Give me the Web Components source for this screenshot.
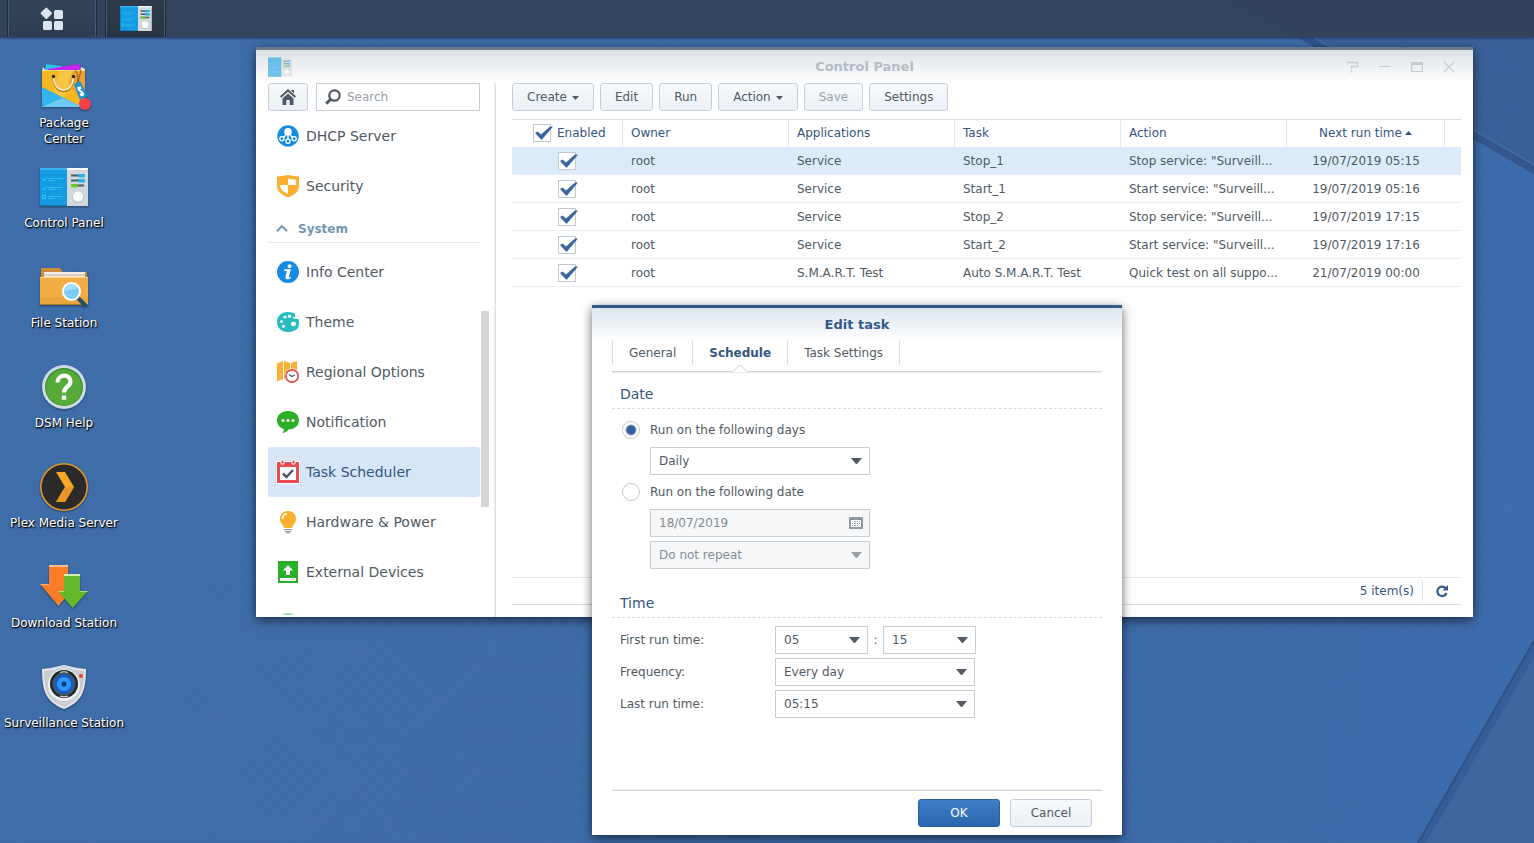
<!DOCTYPE html>
<html lang="en">
<head>
<meta charset="utf-8">
<title>Control Panel</title>
<style>
  html, body { margin: 0; height: 100%; }
  body {
    font: 12px/16px "DejaVu Sans", Verdana, sans-serif;
    color: #505a64;
    overflow: hidden;
  }
</style>
</head>
<body>
<ds-desktop></ds-desktop>

<script>
const ICONS = {
  apps: ['0 0 24 24', `<g fill="#dbe3ef"><rect x="2" y="2" width="8.600" height="8.600" rx="1" transform="rotate(45 6.300 6.300)"/><rect x="14" y="3" width="9" height="9" rx="1.500"/><rect x="3" y="14" width="9" height="9" rx="1.500"/><rect x="14" y="14" width="9" height="9" rx="1.500"/></g>`],
  panel: ['0 0 48 38', `<rect width="27" height="38" fill="#159be2"/><rect width="27" height="2" fill="#3db4ee"/><rect y="37" width="27" height="1" fill="#0c7dbd"/><rect x="27" width="21" height="38" fill="#d3d8dc"/><rect x="27" width="21" height="2" fill="#f6f8f9"/><path d="M2.500 11l1.500 2 3-4M2.500 20l1.500 2 3-4M2.500 27.500h3v3h-3z" fill="none" stroke="#2ed0ee"/><path d="M8 10.500h15M8 12.500h7M8 19.500h15M8 21.500h7M8 28.500h15M8 30.500h7" stroke="#2ecdf0" stroke-width="1" opacity=".8"/><path d="M31 7.500h13M31 12.500h13M31 17.500h13" stroke="#4c5b66" stroke-width="2.200"/><rect x="38" y="6" width="7" height="3.500" rx="1" fill="#27b5e8"/><rect x="38" y="11" width="7" height="3.500" rx="1" fill="#27b5e8"/><rect x="31" y="16" width="7" height="3.500" rx="1" fill="#6cc82f"/><circle cx="38" cy="29" r="6" fill="#b9c0c6"/><circle cx="38" cy="28.500" r="5.200" fill="#fafbfb"/>`],
  pkg: ['0 0 52 50', `<path d="M6 2l16 2v10H4z" fill="#2fc4ee"/><path d="M8 7l31-5 3 10H8z" fill="#c922e8"/><path d="M3 5l4 5H2zM41 5l4 2v4h-5z" fill="#f3e8c2"/><rect x="2" y="8" width="43" height="37" fill="#f5b921"/><path d="M20 8h25v37z" fill="#f0a031"/><path d="M20 8h13L24 36 14 30z" fill="#f7c544"/><path d="M2 25l40 20H2z" fill="#35b3ee"/><path d="M2 45l20-9 20 9z" fill="#6ccaf4"/><path d="M2 8h43v1H2z" fill="#ffdf80"/><path d="M13.500 15c0 8 4 14 10 14s10-6 10-14" fill="none" stroke="#b57a15" stroke-width="2.400"/><path d="M13.500 14c0 8 4 14 10 14s10-6 10-14" fill="none" stroke="#f9e7bd" stroke-width="1.800"/><circle cx="13.500" cy="14.500" r="1.700" fill="#2d2213"/><circle cx="33.500" cy="14.500" r="1.700" fill="#2d2213"/><path d="M35 8c4 4 3 10 2 15M41 8c-1 6-3 10-3 14" fill="none" stroke="#8a5a16"/><path d="M34 22l6-3 8 15-8 4z" fill="#1f93cf"/><path d="M37 25.500l3.500-1.500 1.200 2.500-1.700 1 3 2.500 1.500 3-3.500 1.500-1.500-2.500 1.700-1-3-2.500z" fill="#fff"/><circle cx="45" cy="42" r="6" fill="#f2414a"/>`],
  folder: ['0 0 48 40', `<path d="M1 1h19l3 4h24v10H1z" fill="#c98f3a"/><path d="M4 5h41v8H4z" fill="#f1ece2"/><path d="M4 8h41" stroke="#bdb3a2"/><path d="M0 10h48v28H0z" fill="#f2ae45"/><path d="M0 30h48v8H0z" fill="#e9a43e"/><path d="M0 37h48v1H0z" fill="#ad772a"/><path d="M0 10h48v1H0z" fill="#ffd07a"/><path d="M38 31l8 8" stroke="#1f5166" stroke-width="4"/><circle cx="31.500" cy="24.500" r="8.500" fill="#7ccdf5" stroke="#fdfdfd" stroke-width="2"/><path d="M25 24a7 7 0 0 1 13-3z" fill="#a4dff9"/>`],
  help: ['0 0 44 44', `<circle cx="22" cy="22" r="22" fill="#c9dcea"/><circle cx="22" cy="22" r="19" fill="#3f8a2c"/><circle cx="22" cy="22.500" r="18" fill="#55aa39"/><path d="M15.500 17.500c0-9 13-9 13-1 0 5.500-6.500 5-6.500 11" fill="none" stroke="#fff" stroke-width="4.200"/><rect x="19.800" y="30.500" width="4.400" height="4.200" fill="#fff"/>`],
  plex: ['0 0 48 48', `<circle cx="24" cy="24" r="24" fill="#e0952d"/><circle cx="24" cy="24" r="22.400" fill="#2b2a29"/><path d="M16 9h9l9 15-9 15h-9l9-15z" fill="#f5a725"/><path d="M34 24l-9 15h-9l9-15z" fill="#e8952a"/>`],
  down: ['0 0 48 44', `<path d="M9 0h19v19h8L18.500 41 0 19h9z" fill="#fb7d25"/><path d="M9 0h19v2H9z" fill="#ffc08b"/><path d="M9 19v1L1 20 0 19z" fill="#ffb070"/><path d="M24 9h16v17h8L32.500 43 18 26h6z" fill="#63b92a"/><path d="M24 9h16v2H24z" fill="#d2f3b2"/><path d="M18 26h6v1h-5zM40 26h8l-1 1h-7z" fill="#a9e27b"/>`],
  cam: ['0 0 44 44', `<path d="M0 4Q11 3 22 0q11 3 22 4c0 22-4 33-22 40C4 37 0 26 0 4z" fill="#e1e5e9"/><path d="M2 6q10-1 20-4 10 3 20 4c0 20-4 29-20 36C6 35 2 26 2 6z" fill="#c8cdd2"/><circle cx="22" cy="20" r="16" fill="#eef0f2"/><circle cx="22" cy="19" r="14" fill="#23272c"/><circle cx="22" cy="19" r="11.500" fill="#4b545e"/><circle cx="22" cy="19" r="10" fill="#115fc2"/><circle cx="22" cy="19" r="7" fill="#2f97f2"/><circle cx="22" cy="19" r="2.600" fill="#0c3c83"/><path d="M18 7.500q4-1.500 8 0M18 31q4 1.500 8 0" stroke="#dfe4e8" stroke-width="1.200" fill="none"/><circle cx="39" cy="11" r="2" fill="#e53f2e"/>`],
  home: ['0 0 16 16', `<path d="M8 0l8 7.300-1.300 1.400L8 2.700 1.300 8.700 0 7.300z"/><path d="M8 4.500l5.500 5V16h-3.800v-5H6.300v5H2.500V9.500z"/><path d="M11.500 1H14v3.500L11.500 2z"/>`],
  search: ['0 0 16 16', `<circle cx="9.500" cy="6.500" r="5.200" fill="none" stroke="currentColor" stroke-width="2.200"/><path d="M5.800 10.200L1.200 14.600" stroke="currentColor" stroke-width="3"/>`],
  dhcp: ['0 0 22 22', `<circle cx="11" cy="11" r="10.700" fill="#148ae0"/><circle cx="11" cy="6.800" r="3.800" fill="#fff"/><path d="M11 9v6M9 9.500Q8 12 5 12.500M13 9.500q1 2.500 4 3" stroke="#fff" stroke-width="1.500" fill="none"/><g fill="#148ae0" stroke="#fff" stroke-width="1.300"><circle cx="4.900" cy="13.800" r="2.100"/><circle cx="11" cy="16.200" r="2.100"/><circle cx="17.100" cy="13.800" r="2.100"/></g>`],
  shield: ['0 0 22 22', `<path d="M0 1.500Q5.500 1 11 0q5.500 1 11 1.500V11c0 6-5 9-11 11.500C5 20 0 17 0 11z" fill="#fbaf33"/><path d="M11 3.500q4 .8 7.800 1V10H11zM3.300 10H11v9C7 17 3.300 15 3.300 11z" fill="#fff"/>`],
  info: ['0 0 22 22', `<circle cx="11" cy="11" r="11" fill="#148ae0"/><circle cx="12.600" cy="5.200" r="1.900" fill="#fff"/><path d="M7.300 8.300h6.600l-2.100 7.700c-.2.800.6.700 2-.3l.5.700c-2 2.200-6.600 2.900-5.900-.3l1.500-6H7.100z" fill="#fff"/>`],
  theme: ['0 0 22 20', `<path d="M11 0C4 0 0 4.500 0 10s4 10 11 10c4.500 0 8.500-1.500 10.500-5 .5-1.300-.5-1.300-2-1-3 .8-5.500 0-5.500-2 0-2.200 2-2.500 5-2.200 2 .2 3 0 2.900-1C21.500 3 17 0 11 0z" fill="#25bcc0"/><path d="M17 14h4.600l.4-5h-5z" fill="#25bcc0"/><g fill="#fff"><circle cx="8" cy="5" r="1.600"/><circle cx="12.600" cy="4.200" r="1.600"/><circle cx="4.500" cy="9.500" r="1.500"/><circle cx="6.500" cy="14.300" r="1.600"/><path d="M15 5h3v-3h4v5h-4z"/><ellipse cx="16.500" cy="11.800" rx="2.600" ry="2.100"/></g>`],
  region: ['0 0 22 22', `<path d="M0 2.500L6 0v18l-6 2.500zM7 0l6 2v17l-6-1.500zM14 2l6-2v19h-6z" fill="#fbaf33"/><circle cx="15" cy="15" r="7.500" fill="#fff"/><circle cx="15" cy="15" r="6.200" fill="#fff" stroke="#e84d52" stroke-width="1.700"/><path d="M12 13.500l3 2 3-1.500" fill="none" stroke="#505a64" stroke-width="1.300"/>`],
  bell: ['0 0 22 22', `<path d="M11 0c6.500 0 11 4 11 9.300s-4.500 9.200-10.500 9.300C10 21 7.500 22 5 22c1.500-1 2-2.500 1.800-4C2.500 16.800 0 13.500 0 9.300 0 4 4.500 0 11 0z" fill="#2bae28"/><g fill="#fff"><circle cx="6" cy="9.500" r="1.500"/><circle cx="11" cy="9.500" r="1.500"/><circle cx="16" cy="9.500" r="1.500"/></g>`],
  sched: ['0 0 24 24', `<path d="M0 1h4V0h5v1h6V0h5v1h4v23H0z" fill="#fff"/><path d="M1 2h22v21H1z" fill="#ea4a50"/><path d="M4 7h16v13H4z" fill="#fff"/><path d="M5 0h3v4H5zM16 0h3v4h-3z" fill="#ea4a50" stroke="#fff"/><path d="M7 13.500l3.500 3.500L17 10" fill="none" stroke="#505a64" stroke-width="2.500"/>`],
  bulb: ['0 0 22 22', `<path d="M11 0c5 0 8 3.500 8 8 0 4.500-3.500 6-4 9H7c-.5-3-4-4.500-4-9 0-4.500 3-8 8-8z" fill="#fbaf33"/><path d="M5.500 8c0-3 2-5 4.500-5.300" fill="none" stroke="#fff" stroke-width="1.600"/><path d="M7 18.500h8M7.500 20.300h7M9 21.700h4" stroke="#8f979e" stroke-width="1"/>`],
  ext: ['0 0 22 22', `<rect x="1" width="20" height="22" rx=".5" fill="#2bae28"/><path d="M11 4l5 5.500h-3V14H9V9.500H6z" fill="#fff"/><rect x="3" y="17" width="16" height="3" fill="#fff"/><rect x="15" y="18" width="2" height="1" fill="#fbaf33"/>`],
  update: ['0 0 22 22', `<circle cx="11" cy="11" r="9" fill="#9fd6a2"/>`],
  up: ['0 0 12 7', `<path d="M.8 6.300L6 1.200l5.200 5.100" fill="none" stroke="currentColor" stroke-width="1.900"/>`],
  caret: ['0 0 7 4', `<path d="M0 0h7L3.500 4z"/>`],
  sort: ['0 0 7 4', `<path d="M0 4h7L3.500 0z"/>`],
  whelp: ['0 0 12 12', `<path d="M0 1.500h10.500v4H4.500V8M4.500 9.500v2" fill="none" stroke="currentColor" stroke-width="1.400"/>`],
  wmin: ['0 0 12 12', `<path d="M0 5.500h12" stroke="currentColor" stroke-width="1.200"/>`],
  wmax: ['0 0 12 12', `<path d="M.7 1.500h10.600v9H.7z" fill="none" stroke="currentColor" stroke-width="1.200"/><path d="M0 1h12v3H0z"/>`],
  wclose: ['0 0 12 12', `<path d="M.6 .6l10.800 10.800M11.400 .6L.6 11.400" stroke="currentColor" stroke-width="1.300"/>`],
  refresh: ['0 0 12 12', `<path d="M9.600 3.200A4.700 4.700 0 1 0 10.500 8" fill="none" stroke="currentColor" stroke-width="2.200"/><path d="M12 0v5.500H6.500z"/>`],
  cal: ['0 0 14 12', `<rect width="14" height="12" rx="1"/><path d="M2 3h10v7H2z" fill="#fff"/><path d="M5 4h2v1H5zM8 4h1v1H8zM10 4h1v1h-1zM3 6h1v1H3zM5 6h2v1H5zM8 6h1v1H8zM10 6h1v1h-1zM3 8h1v1H3zM5 8h2v1H5zM8 8h1v1H8z"/>`]
};

/* Registers an element whose shadow root is cloned from the given markup. */
const define = (name, html) => {
  const tpl = document.createElement('template');
  tpl.innerHTML = html;
  customElements.define(name, class extends HTMLElement {
    constructor() {
      super();
      this.attachShadow({ mode: 'open' }).append(tpl.content.cloneNode(true));
    }
  });
};

customElements.define('ds-icon', class extends HTMLElement {
  constructor() {
    super();
    this.attachShadow({ mode: 'open' });
  }
  connectedCallback() {
    const [box, body] = ICONS[this.getAttribute('name')];
    this.shadowRoot.innerHTML = `<style>:host{display:block;flex:none}svg{display:block;width:100%;height:100%;overflow:visible}</style>
      <svg viewBox="${box}" fill="currentColor" aria-hidden="true">${body}</svg>`;
  }
});

define('ds-button', `
<style>
  :host { display: block; }
  button {
    display: flex; align-items: center; justify-content: center; gap: 5px;
    box-sizing: border-box; width: 100%; height: 28px; padding: 0 14px; margin: 0;
    font: inherit; color: #505a64; white-space: nowrap;
    background: linear-gradient(#f7fafc, #eaf0f5);
    border: 1px solid #c6d0da; border-radius: 3px;
  }
  :host([off]) button { color: #9aa3ab; }
  :host([primary]) button { color: #fff; background: linear-gradient(#3f7fc9, #2a66ae); border-color: #2a5f9e; }
  :host([square]) button { padding: 0; }
</style>
<button type="button"><slot></slot></button>`);

define('ds-wallpaper', `
<style>
  :host { position: absolute; inset: 0; background: linear-gradient(100deg, #4070ac, #3e6da9 60%, #3d6eae); }
  svg { position: absolute; right: 0; width: 334px; height: 220px; }
  .top { top: 0; } .bottom { bottom: 0; height: 243px; }
  .weave { position: absolute; inset: 0;
    background:
      repeating-linear-gradient(0deg, rgba(20,50,100,.04) 0 1px, transparent 1px 4px),
      repeating-linear-gradient(45deg, rgba(20,50,100,.03) 0 1px, transparent 1px 3px),
      repeating-linear-gradient(135deg, rgba(20,50,100,.03) 0 1px, transparent 1px 3px); }
</style>
<svg class="top" viewBox="0 0 334 220"><path d="M48 0H334V165z" fill="#3c629b"/><path d="M33 0H48L334 165V174z" fill="#34578f"/><path d="M49 0L334 165" stroke="#4f78ad"/></svg>
<svg class="bottom" viewBox="0 0 334 243"><path d="M334 41V243H218z" fill="#3e699f"/><path d="M334 41V57L226 243H218z" fill="#365e9b"/><path d="M334 41L218 243" stroke="#2f5286" stroke-width="2"/></svg>
<div class="weave"></div>`);

define('ds-taskbar', `
<style>
  :host { display: flex; gap: 8px; box-sizing: border-box; height: 38px; padding-left: 7px; position: relative;
    background: rgba(50,64,84,.9); border-bottom: 1px solid #2a4468; box-shadow: 0 1px 2px rgba(20,40,80,.4); }
  button { display: flex; align-items: center; justify-content: center; margin: 0; padding: 0; box-sizing: border-box;
    height: 37px; width: 90px; border: 1px solid #1d2a3b; border-width: 0 1px; background: linear-gradient(#33445a, #2e3d50);
    box-shadow: inset 1px 0 #4a5b70, inset -1px 0 #4a5b70; }
  button + button { width: 61px; background: linear-gradient(#2c3a4c, #273443); }
  .apps { width: 24px; height: 24px; }
  .panel { width: 32px; height: 25px; }
</style>
<button aria-label="Main menu"><ds-icon class="apps" name="apps"></ds-icon></button>
<button aria-label="Control Panel"><ds-icon class="panel" name="panel"></ds-icon></button>`);

define('ds-shortcut', `
<style>
  :host { display: block; height: 100px; }
  a { display: grid; justify-items: center; row-gap: 4px; color: #fff; text-decoration: none; text-align: center;
    text-shadow: 1px 1px 1px #000, 0 1px 2px rgba(0,0,0,.8); white-space: nowrap; }
  .art { display: flex; height: 48px; align-items: center; justify-content: center;
    filter: drop-shadow(0 1px 1px rgba(0,0,0,.4)); }
</style>
<a href="#"><span class="art"><slot name="icon"></slot></span><span><slot></slot></span></a>`);

define('ds-nav-item', `
<style>
  :host { display: block; }
  a { display: flex; align-items: center; gap: 6px; box-sizing: border-box; height: 50px; padding: 0 8px;
    font-size: 14px; line-height: 20px; color: #505a64; text-decoration: none; border-radius: 3px; white-space: nowrap; }
  :host([current]) a { background: #d6e6f8; color: #35557f; }
  .pic { width: 24px; display: flex; justify-content: center; }
</style>
<a href="#"><span class="pic"><slot name="icon"></slot></span><slot></slot></a>`);

define('ds-sidebar', `
<style>
  :host { display: flex; flex-direction: column; min-height: 0; position: relative; box-sizing: border-box;
    padding: 0 15px 2px 12px; border-right: 1px solid #dcdfe2; box-shadow: inset -2px 0 2px -1px #eceef0; }
  .bar { display: grid; grid-template-columns: 40px 1fr; gap: 8px; }
  .find { display: flex; align-items: center; gap: 6px; box-sizing: border-box; height: 28px; padding-left: 8px;
    border: 1px solid #c6cdd4; color: #505a64; min-width: 0; }
  input { flex: 1; min-width: 0; border: 0; outline: 0; padding: 0; background: none; font: inherit; color: inherit; }
  input::placeholder { color: #9aa0a8; opacity: 1; }
  nav { flex: 1; min-height: 0; overflow: hidden; }
  h2 { display: flex; align-items: center; gap: 10px; box-sizing: border-box; height: 32px; margin: 0 0 4px; padding: 4px 8px 0;
    border-bottom: 1px solid #e9ecee; font-size: 12px; color: #7397b1; }
  .g { width: 22px; height: 22px; } .s { width: 24px; height: 24px; }
  .h { width: 16px; height: 16px; } .u { width: 12px; height: 7px; }
  .thumb { position: absolute; right: 6px; top: 228px; width: 8px; height: 196px; background: #d4d6d8; }
</style>
<div class="bar">
  <ds-button square><ds-icon class="h" name="home"></ds-icon></ds-button>
  <label class="find"><ds-icon class="h" name="search"></ds-icon><input type="text" placeholder="Search" aria-label="Search"></label>
</div>
<nav>
  <ds-nav-item><ds-icon slot="icon" class="g" name="dhcp"></ds-icon>DHCP Server</ds-nav-item>
  <ds-nav-item><ds-icon slot="icon" class="g" name="shield"></ds-icon>Security</ds-nav-item>
  <h2><ds-icon class="u" name="up"></ds-icon>System</h2>
  <ds-nav-item><ds-icon slot="icon" class="g" name="info"></ds-icon>Info Center</ds-nav-item>
  <ds-nav-item><ds-icon slot="icon" class="g" name="theme"></ds-icon>Theme</ds-nav-item>
  <ds-nav-item><ds-icon slot="icon" class="g" name="region"></ds-icon>Regional Options</ds-nav-item>
  <ds-nav-item><ds-icon slot="icon" class="g" name="bell"></ds-icon>Notification</ds-nav-item>
  <ds-nav-item current><ds-icon slot="icon" class="s" name="sched"></ds-icon>Task Scheduler</ds-nav-item>
  <ds-nav-item><ds-icon slot="icon" class="g" name="bulb"></ds-icon>Hardware &amp; Power</ds-nav-item>
  <ds-nav-item><ds-icon slot="icon" class="g" name="ext"></ds-icon>External Devices</ds-nav-item>
  <ds-nav-item><ds-icon slot="icon" class="g" name="update"></ds-icon></ds-nav-item>
</nav>
<div class="thumb"></div>`);

const TASKS = [
  ['Service', 'Stop_1', 'Stop service: "Surveill...', '19/07/2019 05:15'],
  ['Service', 'Start_1', 'Start service: "Surveill...', '19/07/2019 05:16'],
  ['Service', 'Stop_2', 'Stop service: "Surveill...', '19/07/2019 17:15'],
  ['Service', 'Start_2', 'Start service: "Surveill...', '19/07/2019 17:16'],
  ['S.M.A.R.T. Test', 'Auto S.M.A.R.T. Test', 'Quick test on all suppo...', '21/07/2019 00:00']
];

define('ds-task-table', `
<style>
  :host { display: block; }
  table { width: 100%; table-layout: fixed; border-collapse: separate; border-spacing: 0; border-top: 1px solid #d3dbe2; }
  th, td { box-sizing: border-box; padding: 0 4px 0 8px; text-align: left; font-weight: normal; white-space: nowrap; overflow: hidden; }
  th { height: 27px; padding-bottom: 2px; color: #35557f; border-right: 1px solid #e1e8ee; }
  th:last-child { border-right: 0; }
  td { height: 28px; border-bottom: 1px solid #e9eff4; }
  tbody tr:first-child td { background: #dcebf9; }
  td.tick, td.time { padding: 0; text-align: center; }
  th.time { padding: 0 0 2px; text-align: center; }
  th.tick { padding: 0 0 2px 21px; }
  th.tick label { display: flex; align-items: center; gap: 4px; }
  .time span { display: inline-flex; align-items: center; gap: 3px; }
  .a { width: 7px; height: 4px; color: #35557f; }
  input { appearance: none; display: block; width: 20px; height: 18px; margin: 0 auto;
    background: url("data:image/svg+xml,%3Csvg xmlns='http://www.w3.org/2000/svg' width='20' height='18'%3E%3Crect x='.5' y='.5' width='17' height='17' fill='white' stroke='%23c3c9d0'/%3E%3Cpath d='M2 9l2.500-1.500L8 10.500 17 2.500h3L9 15.500H8z' fill='%23386799'/%3E%3C/svg%3E") no-repeat; }
  th input { margin: 0; }
</style>
<table>
  <colgroup><col style="width:111px"><col style="width:166px"><col style="width:166px"><col style="width:166px"><col style="width:166px"><col style="width:158px"><col></colgroup>
  <thead><tr>
    <th class="tick"><label><input type="checkbox" checked>Enabled</label></th>
    <th>Owner</th><th>Applications</th><th>Task</th><th>Action</th>
    <th class="time"><span>Next run time<ds-icon class="a" name="sort"></ds-icon></span></th><th></th>
  </tr></thead>
  <tbody>${TASKS.map(([app, task, action, time]) => `<tr>
    <td class="tick"><input type="checkbox" checked aria-label="Enable ${task}"></td>
    <td>root</td><td>${app}</td><td>${task}</td><td>${action}</td><td class="time">${time}</td><td></td></tr>`).join('')}
  </tbody>
</table>`);

define('ds-control-panel', `
<style>
  :host { display: grid; grid-template-rows: 33px 1fr; box-sizing: border-box; overflow: hidden;
    background: #fff; border-top: 3px solid #6d7c8d; box-shadow: 0 3px 10px rgba(0,0,0,.6); }
  header { display: grid; grid-template-columns: 1fr auto 1fr; align-items: center; padding: 0 12px;
    background: linear-gradient(#dde2e7, #fff); }
  h1 { margin: 0; font-size: 13px; line-height: 16px; color: #b3bcc5; }
  .p { width: 24px; height: 20px; opacity: .6; }
  .ctl { display: flex; gap: 20px; justify-content: flex-end; padding-right: 6px; }
  .ctl button { width: 12px; height: 12px; padding: 0; border: 0; background: none; color: #c5cad0; }
  .body { display: grid; grid-template-columns: 240px 1fr; min-height: 0; }
  main { display: flex; flex-direction: column; gap: 8px; min-width: 0; padding: 0 12px 12px 16px; }
  .tools { display: flex; gap: 6px; }
  .c { width: 7px; height: 4px; margin-top: 2px; }
  footer { display: flex; align-items: center; justify-content: flex-end; box-sizing: border-box; height: 28px; margin-top: auto;
    border: 1px solid #e1eaf0; border-width: 1px 0; border-bottom-color: #d3dfe8; color: #35557f; }
  footer button { display: flex; align-items: center; height: 20px; margin: 0 0 0 8px; padding: 0 13px; border: 0; border-left: 1px solid #d3dfe8;
    background: none; color: #2f5a8e; }
  .r { width: 12px; height: 12px; }
</style>
<header>
  <ds-icon class="p" name="panel"></ds-icon>
  <h1>Control Panel</h1>
  <div class="ctl">
    <button aria-label="Help"><ds-icon name="whelp"></ds-icon></button>
    <button aria-label="Minimize"><ds-icon name="wmin"></ds-icon></button>
    <button aria-label="Maximize"><ds-icon name="wmax"></ds-icon></button>
    <button aria-label="Close"><ds-icon name="wclose"></ds-icon></button>
  </div>
</header>
<div class="body">
  <ds-sidebar></ds-sidebar>
  <main>
    <div class="tools">
      <ds-button>Create<ds-icon class="c" name="caret"></ds-icon></ds-button>
      <ds-button>Edit</ds-button>
      <ds-button>Run</ds-button>
      <ds-button>Action<ds-icon class="c" name="caret"></ds-icon></ds-button>
      <ds-button off>Save</ds-button>
      <ds-button>Settings</ds-button>
    </div>
    <ds-task-table></ds-task-table>
    <footer>5 item(s)<button aria-label="Refresh"><ds-icon class="r" name="refresh"></ds-icon></button></footer>
  </main>
</div>`);

define('ds-tab', `
<style>
  :host { display: block; border-right: 1px solid #d9dde1; }
  button { display: block; height: 25px; margin: 0; padding: 0 16px; border: 0; background: none; font: inherit; color: #505a64; position: relative; }
  :host([current]) button { font-weight: bold; color: #35557f; }
  svg { display: none; position: absolute; left: calc(50% - 7px); top: 24px; width: 14px; height: 8px; }
  :host([current]) svg { display: block; }
</style>
<button type="button" role="tab"><slot></slot><svg viewBox="0 0 14 8"><path d="M0 6.500h1L7 .8l6 5.700h1V8H0z" fill="#fff"/><path d="M0 6.500h1L7 .8l6 5.700h1" fill="none" stroke="#ccd1d5"/></svg></button>`);

define('ds-schedule-form', `
<style>
  :host { display: block; }
  h3 { box-sizing: border-box; height: 29px; margin: 0 0 8px; padding: 4px 8px 0; border-bottom: 1px dashed #d5dade;
    font-size: 14px; line-height: 20px; font-weight: normal; color: #35557f; }
  .date { display: grid; row-gap: 4px; padding-left: 10px; }
  .pick { display: flex; align-items: center; gap: 10px; height: 26px; }
  .sub { display: grid; padding-left: 28px; width: 220px; }
  input[type=radio] { appearance: none; box-sizing: border-box; width: 18px; height: 18px; margin: 0; border: 1px solid #c3cad1; border-radius: 50%; background: #fff; }
  input[type=radio]:checked { background: radial-gradient(circle, #2f629c 4px, #fff 6px); }
  select { appearance: none; box-sizing: border-box; width: 100%; height: 28px; margin: 0; padding: 0 8px; border: 1px solid #c6cdd4; border-radius: 0;
    font: inherit; color: #505a64; opacity: 1;
    background: #fff url("data:image/svg+xml,%3Csvg xmlns='http://www.w3.org/2000/svg' width='11' height='6'%3E%3Cpath d='M0 0h11L6 6H5z' fill='%23505a64'/%3E%3C/svg%3E") no-repeat right 7px center; }
  select:disabled { color: #848b92; background: #f5f7f9 url("data:image/svg+xml,%3Csvg xmlns='http://www.w3.org/2000/svg' width='11' height='6'%3E%3Cpath d='M0 0h11L6 6H5z' fill='%239aa1a8'/%3E%3C/svg%3E") no-repeat right 7px center; }
  .cal { display: grid; grid-template-columns: 1fr 14px; align-items: center; box-sizing: border-box; height: 28px; padding: 0 6px 0 8px;
    border: 1px solid #c6cdd4; background: #f5f7f9; color: #8f979e; }
  .cal input { min-width: 0; width: 100%; border: 0; padding: 0; background: none; font: inherit; color: #848b92; }
  .k { width: 14px; height: 12px; }
  .time-title { margin-top: 20px; }
  .time { display: grid; grid-template-columns: 155px 201px; row-gap: 4px; align-items: center; padding-left: 8px; }
  .time > select { width: 200px; }
  .hm { display: grid; grid-template-columns: 93px 15px 93px; align-items: center; text-align: center; }
</style>
<h3>Date</h3>
<div class="date">
  <label class="pick"><input type="radio" name="mode" checked>Run on the following days</label>
  <div class="sub"><select aria-label="Days"><option>Daily</option></select></div>
  <label class="pick"><input type="radio" name="mode">Run on the following date</label>
  <div class="sub"><div class="cal"><input type="text" aria-label="Date" value="18/07/2019" disabled><ds-icon class="k" name="cal"></ds-icon></div></div>
  <div class="sub"><select aria-label="Repeat" disabled><option>Do not repeat</option></select></div>
</div>
<h3 class="time-title">Time</h3>
<div class="time">
  <label for="hour">First run time:</label>
  <div class="hm"><select id="hour"><option>05</option></select><span>:</span><select aria-label="Minute"><option>15</option></select></div>
  <label for="freq">Frequency:</label>
  <select id="freq"><option>Every day</option></select>
  <label for="last">Last run time:</label>
  <select id="last"><option>05:15</option></select>
</div>`);

define('ds-task-dialog', `
<style>
  :host { display: block; box-sizing: border-box; padding: 0 20px 8px; border-top: 3px solid #35598a;
    background: #fff linear-gradient(#dde6ef, #fff) no-repeat 0 0 / 100% 34px; box-shadow: 0 3px 10px rgba(0,0,0,.6); }
  h2 { margin: 0; padding: 9px 0 7px; font-size: 13px; line-height: 16px; text-align: center; color: #35598a; }
  .tabs { display: flex; height: 31px; align-items: flex-start; border-bottom: 1px solid #ccd1d5; box-shadow: 0 1px 1px #eceef0; }
  .tabs::before { content: ""; width: 1px; height: 25px; background: #d9dde1; }
  ds-schedule-form { margin: 8px 0 72px; }
  footer { display: flex; justify-content: flex-end; gap: 10px; padding: 8px 10px 0; border-top: 1px solid #d3d7da; box-shadow: 0 -1px 1px #eff1f2; }
  footer ds-button { width: 82px; }
</style>
<h2>Edit task</h2>
<div class="tabs" role="tablist"><ds-tab>General</ds-tab><ds-tab current>Schedule</ds-tab><ds-tab>Task Settings</ds-tab></div>
<ds-schedule-form></ds-schedule-form>
<footer><ds-button primary>OK</ds-button><ds-button>Cancel</ds-button></footer>`);

define('ds-desktop', `
<style>
  :host { display: flex; flex-direction: column; position: relative; height: 100vh; overflow: hidden; }
  .space { flex: 1; position: relative; }
  .icons { display: grid; width: 128px; padding-top: 25px; }
  ds-control-panel { position: absolute; left: 256px; right: 61px; top: 9px; bottom: 226px; }
  ds-task-dialog { position: absolute; left: 592px; top: 267px; width: 530px; }
  .pkg { width: 52px; height: 50px; margin-left: 4px; } .panel { width: 48px; height: 38px; }
  .folder { width: 48px; height: 40px; } .round { width: 44px; height: 44px; }
  .plex { width: 48px; height: 48px; } .down { width: 48px; height: 44px; }
</style>
<ds-wallpaper></ds-wallpaper>
<ds-taskbar></ds-taskbar>
<div class="space">
  <div class="icons">
    <ds-shortcut><ds-icon slot="icon" class="pkg" name="pkg"></ds-icon>Package<br>Center</ds-shortcut>
    <ds-shortcut><ds-icon slot="icon" class="panel" name="panel"></ds-icon>Control Panel</ds-shortcut>
    <ds-shortcut><ds-icon slot="icon" class="folder" name="folder"></ds-icon>File Station</ds-shortcut>
    <ds-shortcut><ds-icon slot="icon" class="round" name="help"></ds-icon>DSM Help</ds-shortcut>
    <ds-shortcut><ds-icon slot="icon" class="plex" name="plex"></ds-icon>Plex Media Server</ds-shortcut>
    <ds-shortcut><ds-icon slot="icon" class="down" name="down"></ds-icon>Download Station</ds-shortcut>
    <ds-shortcut><ds-icon slot="icon" class="round" name="cam"></ds-icon>Surveillance Station</ds-shortcut>
  </div>
  <ds-control-panel></ds-control-panel>
  <ds-task-dialog></ds-task-dialog>
</div>`);
</script>
</body>
</html>
